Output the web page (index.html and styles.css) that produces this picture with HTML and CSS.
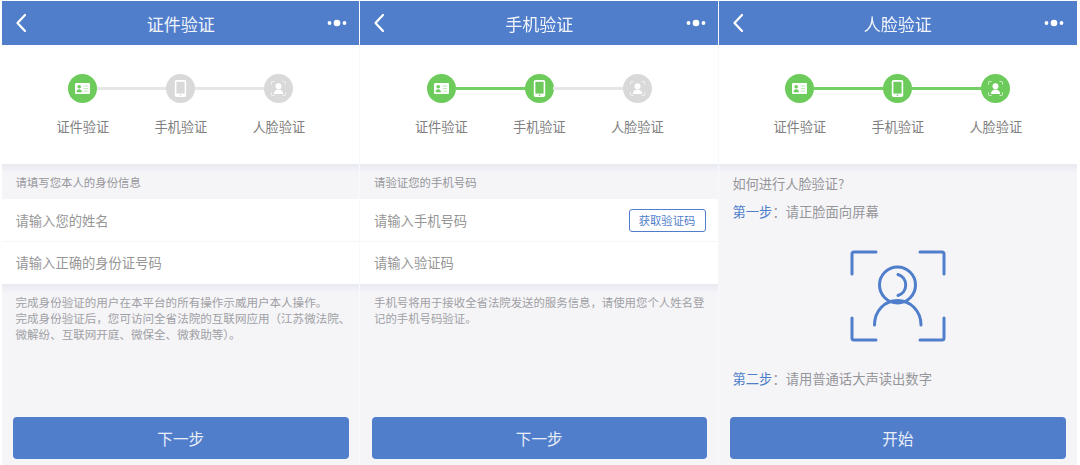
FILE: index.html
```html
<!DOCTYPE html>
<html lang="zh-CN">
<head>
  <meta charset="UTF-8" />
  <meta name="viewport" content="width=device-width, initial-scale=1.0"/>
  <title>实名验证</title>
  <link rel="stylesheet" href="styles.css">
</head>
<body>
  <svg class="defs" width="0" height="0" aria-hidden="true">
    <symbol id="i-back" viewBox="0 0 12 20">
      <path d="M10 2L2.500 10l7.500 8" fill="none" stroke="#fff" stroke-width="2.2" stroke-linecap="round" stroke-linejoin="round"/>
    </symbol>
    <symbol id="i-more" viewBox="0 0 20 8">
      <circle cx="2.500" cy="4" r="1.9" fill="#fff"/>
      <circle cx="10" cy="4" r="3.3" fill="#fff"/>
      <circle cx="17.500" cy="4" r="1.9" fill="#fff"/>
    </symbol>
    <symbol id="i-card" viewBox="0 0 29 29">
      <rect x="7" y="9" width="15" height="11" rx="1" fill="#fff"/>
      <circle cx="11.200" cy="12.800" r="1.8" fill="currentColor"/>
      <path d="M8.500 18.300c0-2 1.100-3 2.700-3s2.700 1 2.700 3z" fill="currentColor"/>
      <path d="M15.800 12h4.400M15.800 14.500h4.400M15.800 17h4.400" stroke="currentColor" stroke-width=".8" opacity=".55"/>
    </symbol>
    <symbol id="i-phone" viewBox="0 0 29 29">
      <rect x="8.800" y="6" width="11.400" height="17" rx="1.8" fill="#fff"/>
      <rect x="10.400" y="7.800" width="8.200" height="11.800" fill="currentColor"/>
      <circle cx="14.500" cy="21.300" r=".8" fill="currentColor"/>
    </symbol>
    <symbol id="i-face" viewBox="0 0 29 29">
      <path d="M7.500 10.500V8.500a1 1 0 0 1 1-1h2M18.500 7.500h2a1 1 0 0 1 1 1v2M21.500 18.500v2a1 1 0 0 1-1 1h-2M10.500 21.500h-2a1 1 0 0 1-1-1v-2" fill="none" stroke="#fff" stroke-width=".9" opacity=".8"/>
      <circle cx="14.500" cy="12.300" r="3" fill="#fff"/>
      <path d="M9.800 20c0-3 2.100-4.600 4.700-4.600s4.700 1.600 4.700 4.600z" fill="#fff"/>
    </symbol>
  </svg>

  <div class="screens">
    <section class="screen">
      <header class="topbar">
        <svg class="back"><use href="#i-back"/></svg>
        <h1>证件验证</h1>
        <svg class="more"><use href="#i-more"/></svg>
      </header>
      <div class="steps">
        <div class="step on">
          <svg class="dot"><use href="#i-card"/></svg>
          <span>证件验证</span>
        </div>
        <div class="step">
          <svg class="dot"><use href="#i-phone"/></svg>
          <span>手机验证</span>
        </div>
        <div class="step">
          <svg class="dot"><use href="#i-face"/></svg>
          <span>人脸验证</span>
        </div>
      </div>
      <div class="content">
        <div class="caption">请填写您本人的身份信息</div>
        <div class="form">
          <div class="row">请输入您的姓名</div>
          <div class="row">请输入正确的身份证号码</div>
        </div>
        <p class="note">完成身份验证的用户在本平台的所有操作示威用户本人操作。<br>完成身份验证后，您可访问全省法院的互联网应用（江苏微法院、<br>微解纷、互联网开庭、微保全、微救助等）。</p>
        <button class="submit" type="button">下一步</button>
      </div>
    </section>

    <section class="screen">
      <header class="topbar">
        <svg class="back"><use href="#i-back"/></svg>
        <h1>手机验证</h1>
        <svg class="more"><use href="#i-more"/></svg>
      </header>
      <div class="steps">
        <div class="step on">
          <svg class="dot"><use href="#i-card"/></svg>
          <span>证件验证</span>
        </div>
        <div class="step on">
          <svg class="dot"><use href="#i-phone"/></svg>
          <span>手机验证</span>
        </div>
        <div class="step">
          <svg class="dot"><use href="#i-face"/></svg>
          <span>人脸验证</span>
        </div>
      </div>
      <div class="content">
        <div class="caption">请验证您的手机号码</div>
        <div class="form">
          <div class="row">请输入手机号码<button class="code" type="button">获取验证码</button></div>
          <div class="row">请输入验证码</div>
        </div>
        <p class="note tight">手机号将用于接收全省法院发送的服务信息，请使用您个人姓名登<br>记的手机号码验证。</p>
        <button class="submit" type="button">下一步</button>
      </div>
    </section>

    <section class="screen">
      <header class="topbar">
        <svg class="back"><use href="#i-back"/></svg>
        <h1>人脸验证</h1>
        <svg class="more"><use href="#i-more"/></svg>
      </header>
      <div class="steps">
        <div class="step on">
          <svg class="dot"><use href="#i-card"/></svg>
          <span>证件验证</span>
        </div>
        <div class="step on">
          <svg class="dot"><use href="#i-phone"/></svg>
          <span>手机验证</span>
        </div>
        <div class="step on">
          <svg class="dot"><use href="#i-face"/></svg>
          <span>人脸验证</span>
        </div>
      </div>
      <div class="content guide">
        <div class="guide-title">如何进行人脸验证?</div>
        <div class="guide-line"><b>第一步</b>：请正脸面向屏幕</div>
        <svg class="face" viewBox="0 0 96 92">
          <g fill="none" stroke="#4f7ecb" stroke-width="3" stroke-linecap="round">
            <path d="M2 24V4a2 2 0 0 1 2-2h22M70 2h22a2 2 0 0 1 2 2v20M94 68v20a2 2 0 0 1-2 2H70M26 90H4a2 2 0 0 1-2-2V68"/>
            <circle cx="47.500" cy="35" r="18"/>
            <path d="M48 24.500a11 11 0 0 1 0 21"/>
            <path d="M24.500 75c0-14 10-24.500 23-24.500S71 61 71 75"/>
          </g>
        </svg>
        <div class="guide-line"><b>第二步</b>：请用普通话大声读出数字</div>
        <button class="submit" type="button">开始</button>
      </div>
    </section>
  </div>
</body>
</html>
```

FILE: styles.css
```css
html, body {
  margin: 0;
  height: 100%;
  background-color: #fff;
}
body {
  font-family: "Noto Sans CJK SC", "Liberation Sans", sans-serif;
  padding: 1px 3px 0 1.5px;
  box-sizing: border-box;
  overflow: hidden;
}
.defs {
  display: block;
  height: 0;
}
.screens {
  display: grid;
  grid-template-columns: repeat(3, 1fr);
  height: 100%;
  filter: blur(0.5px);
}
.screen {
  display: flex;
  flex-direction: column;
  min-width: 0;
}
.screen + .screen {
  box-shadow: -1px 0 0 #f8f9fc;
}
.topbar {
  display: grid;
  grid-template-columns: 1fr auto 1fr;
  align-items: center;
  height: 44px;
  padding: 0 13px;
  background-color: #517ecb;
  flex: none;
}
.topbar h1 {
  margin: 0;
  font-size: 17px;
  font-weight: 400;
  color: #f2f5fb;
}
.back {
  width: 12px;
  height: 20px;
}
.more {
  width: 20px;
  height: 8px;
  justify-self: end;
}
.steps {
  display: flex;
  justify-content: center;
  height: 119px;
  padding-top: 29px;
  box-sizing: border-box;
  background-color: #fff;
  flex: none;
}
.step {
  position: relative;
  width: 98px;
  display: flex;
  flex-direction: column;
  align-items: center;
  color: #d9d9d9;
}
.step.on {
  color: #6dcb5c;
}
.step + .step::before {
  content: "";
  position: absolute;
  top: 13px;
  right: 63px;
  width: 70px;
  height: 3px;
  background-color: #e6e6e6;
}
.step.on + .step.on::before {
  background-color: #74cf65;
}
.dot {
  position: relative;
  width: 29px;
  height: 29px;
  border-radius: 50%;
  background-color: currentColor;
}
.step span {
  margin-top: 14px;
  font-size: 13.2px;
  line-height: 20px;
  color: #808080;
}
.content {
  flex: 1;
  display: flex;
  flex-direction: column;
  background: linear-gradient(#e8eaf1, #f5f5f8 9px);
  background-color: #f5f5f8;
}
.caption {
  height: 35px;
  padding-left: 14px;
  font-size: 11.4px;
  line-height: 36px;
  color: #96969a;
}
.form {
  background-color: #fff;
}
.row {
  display: flex;
  align-items: center;
  justify-content: space-between;
  height: 42px;
  padding: 0 13px 1px 14px;
  box-sizing: content-box;
  margin-bottom: -1px;
  font-size: 13.3px;
  color: #969696;
}
.row + .row {
  border-top: 1px solid #f6f6f6;
  margin-bottom: 0;
  padding-bottom: 1px;
  height: 41px;
}
.code {
  width: 77px;
  height: 23px;
  padding: 0;
  font-family: inherit;
  font-size: 11.3px;
  color: #4f7ecb;
  background-color: #fff;
  border: 1px solid #517ecb;
  border-radius: 3px;
}
.note {
  flex: 1;
  margin: 0;
  padding: 10px 14px 0;
  font-size: 11.55px;
  line-height: 16px;
  color: #a0a0a4;
  white-space: nowrap;
  background: linear-gradient(#e8eaf1, #f5f5f8 9px);
}
.note.tight {
  font-size: 11.4px;
}
.submit {
  flex: none;
  margin: 0 11.5px 6px;
  height: 42px;
  font-family: inherit;
  font-size: 15.6px;
  color: #e8eef8;
  background-color: #517ecb;
  border: none;
  border-radius: 4px;
}
.guide-title {
  margin: 10px 0 0 14px;
  font-size: 13.2px;
  line-height: 20px;
  color: #96969a;
}
.guide-line {
  margin: 8px 0 0 14px;
  font-size: 13.3px;
  line-height: 20px;
  color: #96969a;
}
.guide-line b {
  font-weight: 400;
  color: #4f7ecb;
}
.face {
  width: 96px;
  height: 92px;
  margin: 28px 0 0 131px;
  flex: none;
}
.face + .guide-line {
  margin-top: 27px;
  margin-bottom: auto;
}
```
